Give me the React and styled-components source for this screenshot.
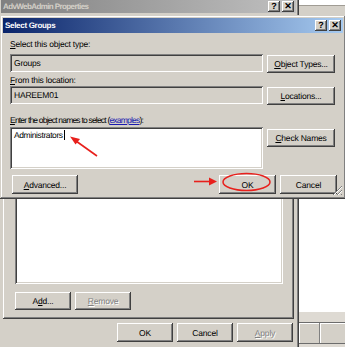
import styled, { createGlobalStyle } from "styled-components";

const GlobalStyle = createGlobalStyle`
  html, body {
    margin: 0;
    padding: 0;
    background: #fff;
  }
  body {
    font-family: "Liberation Sans", Arial, sans-serif;
    font-size: 8.5px;
    letter-spacing: -0.2px;
    text-rendering: geometricPrecision;
    color: #000;
  }
`;

const raised = `
  box-shadow: inset -1px -1px #404040, inset 1px 1px #fff,
    inset -2px -2px #808080, inset 2px 2px #d4d0c8;
`;

const sunken = `
  box-shadow: inset 1px 1px #808080, inset -1px -1px #fff,
    inset 2px 2px #404040, inset -2px -2px #d4d0c8;
`;

const Screen = styled.div`
  position: relative;
  width: 345px;
  height: 347px;
  overflow: hidden;
  background: #fff;
`;

// windows sitting behind, at the right edge of the desktop
const BackTop = styled.div`
  position: absolute;
  left: 299px;
  top: 5px;
  width: 50px;
  height: 30px;
  background: #d4d0c8;
  border-top: 1px solid #a09c94;
`;

const BackBottom = styled.div`
  position: absolute;
  left: 299px;
  top: 312px;
  width: 50px;
  height: 40px;
  background: #dedad3;
  display: flex;
  flex-direction: column;
`;

const HeaderRow = styled.div`
  margin-top: 10px;
  height: 20px;
  display: flex;
  border-top: 1px solid #6c6c6c;
  border-bottom: 1px solid #6c6c6c;
`;

const HeaderCell = styled.div`
  width: ${(p) => p.$w}px;
  height: 100%;
  background: #d4d0c8;
  border-right: 1px solid #808080;
  box-shadow: inset 1px 1px #fff;
`;

const Window = styled.div`
  position: absolute;
  left: ${(p) => p.$x}px;
  top: ${(p) => p.$y}px;
  width: ${(p) => p.$w}px;
  height: ${(p) => p.$h}px;
  box-sizing: border-box;
  padding: 3px;
  background: #d4d0c8;
  display: flex;
  flex-direction: column;
  box-shadow: inset -1px -1px #404040, inset 1px 1px #d4d0c8,
    inset -2px -2px #808080, inset 2px 2px #fff;
`;

const TitleBar = styled.div`
  height: ${(p) => p.$h}px;
  flex-shrink: 0;
  display: flex;
  align-items: center;
  padding: 0 2px 0 2px;
  background: ${(p) =>
    p.$active
      ? "linear-gradient(to right, #0a246a, #a6caf0)"
      : "linear-gradient(to right, #808080, #c0c0c0)"};
  color: ${(p) => (p.$active ? "#fff" : "#d4d0c8")};
  font-weight: bold;
  font-size: 8px;
  letter-spacing: ${(p) => p.$ls ?? -0.4}px;
`;

const TitleText = styled.span`
  flex: 1;
  white-space: nowrap;
`;

const CapButtons = styled.div`
  display: flex;
  gap: 2px;
`;

const CapButton = styled.div`
  width: 12px;
  height: 11px;
  box-sizing: border-box;
  background: #d4d0c8;
  ${raised}
  color: #000;
  font-family: "Liberation Sans", Arial, sans-serif;
  font-weight: bold;
  font-size: 9px;
  letter-spacing: 0;
  line-height: 11px;
  text-align: center;
`;

const PropsBody = styled.div`
  flex: 1;
  display: flex;
  flex-direction: column;
  padding: 6px 2px 0 2px;
`;

const TabPage = styled.div`
  height: 300px;
  flex-shrink: 0;
  box-sizing: border-box;
  padding: 12px 11px 9px 12px;
  display: flex;
  flex-direction: column;
  box-shadow: inset -1px -1px #404040, inset 1px 1px #fff,
    inset -2px -2px #808080;
`;

const ListBox = styled.div`
  flex: 1;
  background: #fff;
  ${sunken}
`;

const Row = styled.div`
  display: flex;
  align-items: ${(p) => p.$align || "center"};
  justify-content: ${(p) => p.$justify || "flex-start"};
  gap: ${(p) => p.$gap ?? 4}px;
  margin-top: ${(p) => p.$mt || 0}px;
  padding-left: ${(p) => p.$pl || 0}px;
  padding-right: ${(p) => p.$pr || 0}px;
`;

const Btn = styled.button`
  box-sizing: border-box;
  flex-shrink: 0;
  width: ${(p) => p.$w || 56}px;
  height: ${(p) => p.$h || 19}px;
  margin-top: ${(p) => p.$mt || 0}px;
  padding: 0;
  border: none;
  border-radius: 0;
  background: #d4d0c8;
  font: inherit;
  letter-spacing: inherit;
  text-rendering: inherit;
  color: ${(p) => (p.disabled ? "#808080" : "#000")};
  text-shadow: ${(p) => (p.disabled ? "1px 1px 0 #fff" : "none")};
  ${raised}
`;

const U = styled.span`
  text-decoration: underline;
`;

const DialogBody = styled.div`
  flex: 1;
  display: flex;
  flex-direction: column;
  padding: 6px 6px 0 7px;
`;

const Label = styled.div`
  height: 11px;
  line-height: 11px;
  margin-top: ${(p) => p.$mt || 0}px;
  letter-spacing: ${(p) => p.$ls ?? -0.2}px;
  white-space: nowrap;
`;

const Link = styled.span`
  color: #1a1ab0;
  text-decoration: underline;
`;

const Field = styled.div`
  box-sizing: border-box;
  width: 253px;
  height: ${(p) => p.$h || 18}px;
  padding: ${(p) => (p.$multi ? "3px 4px" : "0 4px")};
  display: flex;
  align-items: ${(p) => (p.$multi ? "flex-start" : "center")};
  line-height: 11px;
  letter-spacing: ${(p) => (p.$multi ? -0.4 : -0.2)}px;
  background: ${(p) => (p.$readOnly ? "#d4d0c8" : "#fff")};
  ${sunken}
`;

const Caret = styled.span`
  display: inline-block;
  width: 1px;
  height: 10px;
  margin-left: 1px;
  background: #000;
`;

const Grip = styled.svg`
  position: absolute;
  right: 3px;
  bottom: 3px;
`;

const Overlay = styled.svg`
  position: absolute;
  left: 0;
  top: 0;
  pointer-events: none;
`;

const App = () => {
  return (
    <Screen>
      <GlobalStyle />

      <BackTop />
      <BackBottom>
        <HeaderRow>
          <HeaderCell $w={21} />
          <HeaderCell $w={30} />
        </HeaderRow>
      </BackBottom>

      <Window $x={-2} $y={-4} $w={301} $h={370}>
        <TitleBar $h={14} $ls={-0.6}>
          <TitleText>AdvWebAdmin Properties</TitleText>
          <CapButtons>
            <CapButton>?</CapButton>
            <CapButton>✕</CapButton>
          </CapButtons>
        </TitleBar>
        <PropsBody>
          <TabPage>
            <ListBox />
            <Row $mt={8}>
              <Btn $h={18}>
                A<U>d</U>d...
              </Btn>
              <Btn $h={18} disabled>
                <U>R</U>emove
              </Btn>
            </Row>
          </TabPage>
          <Row $mt={4} $justify="flex-end" $gap={4} $pr={1}>
            <Btn>OK</Btn>
            <Btn>Cancel</Btn>
            <Btn disabled>
              <U>A</U>pply
            </Btn>
          </Row>
        </PropsBody>
      </Window>

      <Window $x={0} $y={15} $w={346} $h={184}>
        <TitleBar $h={15} $active $ls={-0.3}>
          <TitleText>Select Groups</TitleText>
          <CapButtons>
            <CapButton>?</CapButton>
            <CapButton>✕</CapButton>
          </CapButtons>
        </TitleBar>
        <DialogBody>
          <Label>
            <U>S</U>elect this object type:
          </Label>
          <Row $mt={4} $align="flex-start">
            <Field $readOnly>Groups</Field>
            <Btn $w={68} $h={18} $mt={1}>
              <U>O</U>bject Types...
            </Btn>
          </Row>
          <Label $mt={2}>
            <U>F</U>rom this location:
          </Label>
          <Row $align="flex-start">
            <Field $readOnly>HAREEM01</Field>
            <Btn $w={68} $h={18} $mt={1}>
              <U>L</U>ocations...
            </Btn>
          </Row>
          <Label $mt={10} $ls={-0.8}>
            <U>E</U>nter the object names to select (<Link>examples</Link>):
          </Label>
          <Row $mt={1} $align="flex-start">
            <Field $multi $h={42}>
              Administrators
              <Caret />
            </Field>
            <Btn $w={68} $h={18} $mt={2}>
              <U>C</U>heck Names
            </Btn>
          </Row>
          <Row $mt={6} $pl={2}>
            <Btn $w={66}>
              <U>A</U>dvanced...
            </Btn>
            <Row $gap={4} style={{ marginLeft: "auto" }}>
              <Btn $w={57}>OK</Btn>
              <Btn $w={57}>Cancel</Btn>
            </Row>
          </Row>
        </DialogBody>
        <Grip width="11" height="11" viewBox="0 0 11 11">
          <path d="M10 1 L1 10 M10 5 L5 10 M10 9 L9 10" stroke="#808080" strokeWidth="1" />
          <path d="M10 2 L2 10 M10 6 L6 10" stroke="#fff" strokeWidth="1" />
        </Grip>
      </Window>

      <Overlay width="345" height="347" viewBox="0 0 345 347">
        <line x1="97" y1="156" x2="76" y2="141" stroke="#e8201c" strokeWidth="1.6" />
        <polygon points="70,136.5 80,139 75.5,144.5" fill="#e8201c" />
        <line x1="194" y1="181.5" x2="210" y2="181.5" stroke="#e8201c" strokeWidth="1.6" />
        <polygon points="217,181.5 209,177.5 209,185.5" fill="#e8201c" />
        <ellipse cx="246.5" cy="182" rx="23.5" ry="8.5" fill="none" stroke="#e8201c" strokeWidth="1.5" />
      </Overlay>
    </Screen>
  );
};

export default App;
